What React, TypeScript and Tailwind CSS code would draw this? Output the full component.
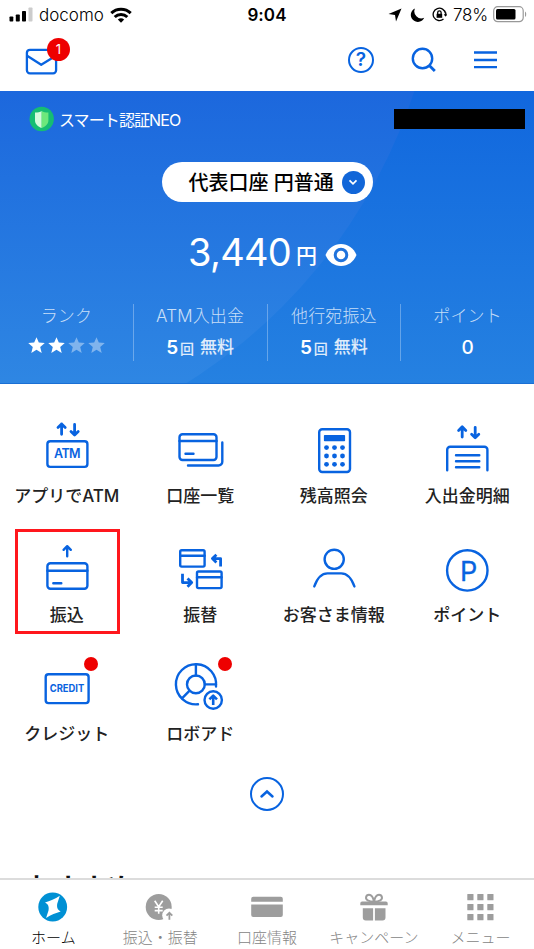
import React from 'react';

interface IconProps {
  children: React.ReactNode;
}

interface MenuItem {
  label: string;
  icon: React.ReactNode;
  isNew?: boolean;
  selected?: boolean;
}

interface TabItem {
  label: string;
  icon: React.ReactNode;
  active?: boolean;
}

const LineIcon: React.FC<IconProps> = ({ children }) => (
  <svg
    width="80"
    height="65"
    viewBox="0 0 80 65"
    fill="none"
    stroke="#0863e0"
    strokeWidth="2.4"
    strokeLinecap="round"
    strokeLinejoin="round"
  >
    {children}
  </svg>
);

const TabIcon: React.FC<IconProps> = ({ children }) => (
  <svg width="40" height="32" viewBox="-20 -16 40 32" fill="#9d9d9d">
    {children}
  </svg>
);

const menuItems: MenuItem[] = [
  {
    label: 'アプリでATM',
    icon: (
      <LineIcon>
        <path d="M34.6 19.3V9M31 12.6l3.6-3.6 3.6 3.6M47.6 9.5v10.3M44 16.4l3.6 3.6 3.6-3.6" strokeWidth="2.8" />
        <rect x="20.4" y="26.3" width="40" height="25.6" rx="2.8" />
        <text x="40.3" y="43.2" textAnchor="middle" fontSize="12.5" fontWeight="600" fill="#0863e0" stroke="none" textLength="26.5">
          ATM
        </text>
      </LineIcon>
    ),
  },
  {
    label: '口座一覧',
    icon: (
      <LineIcon>
        <rect x="19.5" y="19.2" width="37" height="25.8" rx="3" />
        <path d="M19.5 26h37M25.5 38.8h8M28 50.5h30.5a3.8 3.8 0 0 0 3.8-3.8V27.5" />
      </LineIcon>
    ),
  },
  {
    label: '残高照会',
    icon: (
      <LineIcon>
        <rect x="25.2" y="14.2" width="30.8" height="42.8" rx="3" />
        <rect x="29.9" y="20" width="21.2" height="6.2" rx="0.8" fill="#0863e0" stroke="none" />
        {[32.5, 40.5, 48.5].map((cx) =>
          [32.6, 41, 49.3].map((cy) => (
            <circle key={`${cx}-${cy}`} cx={cx} cy={cy} r="2.4" fill="#0863e0" stroke="none" />
          ))
        )}
      </LineIcon>
    ),
  },
  {
    label: '入出金明細',
    icon: (
      <LineIcon>
        <path d="M35.2 22.1V11.8M31.6 15.4l3.6-3.6 3.6 3.6M48.2 12.3v10.3M44.6 19.2l3.6 3.6 3.6-3.6" strokeWidth="2.8" />
        <path d="M20.2 55.2V34.7a3 3 0 0 1 3-3h34.2a3 3 0 0 1 3 3v20.5M29 40.2h23.3M29 46.2h23.3M29 52.2h23.3" />
      </LineIcon>
    ),
  },
  {
    label: '振込',
    selected: true,
    icon: (
      <LineIcon>
        <path d="M40.2 22.3V12.2M36.6 15.8l3.6-3.6 3.6 3.6" />
        <rect x="20.4" y="29.3" width="40" height="25.5" rx="3" />
        <path d="M20.4 36.7h40M26.3 49.2h8" />
      </LineIcon>
    ),
  },
  {
    label: '振替',
    icon: (
      <LineIcon>
        <rect x="20.2" y="16.2" width="24.4" height="16.4" rx="1.5" />
        <rect x="37" y="37.5" width="24.6" height="16.6" rx="1.5" />
        <path d="M20.2 21.8h24.4M37 43.2h24.6" />
        <path d="M60.6 32.6v-8h-7.4M56.4 20.8l-4 3.8 4 3.8M22.5 39.8v8.8h8M27.5 44.4l4.2 4.2-4.2 4.2" strokeWidth="2.8" strokeLinecap="butt" />
      </LineIcon>
    ),
  },
  {
    label: 'お客さま情報',
    icon: (
      <LineIcon>
        <circle cx="40.2" cy="25.3" r="9.6" />
        <path d="M20.3 52.4C23.3 44 28 39.4 33.5 39.4h13.7c5.5 0 10.2 4.6 13.2 13" />
      </LineIcon>
    ),
  },
  {
    label: 'ポイント',
    icon: (
      <LineIcon>
        <circle cx="40.3" cy="36.4" r="20.2" />
        <text x="41.6" y="46.5" textAnchor="middle" fontSize="27" fontWeight="400" fill="#0863e0" stroke="#0863e0" strokeWidth="0.3">
          P
        </text>
      </LineIcon>
    ),
  },
  {
    label: 'クレジット',
    isNew: true,
    icon: (
      <LineIcon>
        <rect x="18.7" y="21.2" width="42.9" height="28.9" rx="2.8" />
        <text x="40" y="39.4" textAnchor="middle" fontSize="10.5" fontWeight="700" fill="#0863e0" stroke="none" textLength="34.5" lengthAdjust="spacingAndGlyphs">
          CREDIT
        </text>
      </LineIcon>
    ),
  },
  {
    label: 'ロボアド',
    isNew: true,
    icon: (
      <LineIcon>
        <path d="M56 33.5A20.1 20.1 0 1 0 38 51.3" />
        <circle cx="35.9" cy="31.4" r="8.9" />
        <path d="M35.9 22.5v-11M44.8 31.4h11.2M29.6 37.7l-7.6 7.6" />
        <circle cx="53.2" cy="47" r="8.7" />
        <path d="M53.2 52v-9.3M49.4 46.4l3.8-3.8 3.8 3.8" strokeWidth="2.6" strokeLinecap="butt" />
      </LineIcon>
    ),
  },
];

const tabs: TabItem[] = [
  {
    label: 'ホーム',
    active: true,
    icon: (
      <TabIcon>
        <circle cx="-0.3" cy="0" r="14.4" fill="#0090d4" />
        <path d="M6.8-11.2C2-7.9-3-6-8-4.6-4.6-3-3.8 0-4.5 3.5L-6.9 11C-2 7.6 3 5.9 7.7 4.4 4.4 3 3.6 0 4.300-3.500Z" fill="#fff" />
      </TabIcon>
    ),
  },
  {
    label: '振込・振替',
    icon: (
      <TabIcon>
        <circle cx="-1.3" cy="0" r="13" />
        <path d="M-5.3-6.2l4 6 4-6M-1.3-.2v7M-5.3.3h8M-5.3 3.6h8" fill="none" stroke="#fff" strokeWidth="1.6" />
        <circle cx="9" cy="8.4" r="6.8" fill="#fff" />
        <path d="M9.4 12.8V6.2M6.5 8.6l2.9-2.9 2.9 2.9" fill="none" stroke="#9d9d9d" strokeWidth="1.8" />
      </TabIcon>
    ),
  },
  {
    label: '口座情報',
    icon: (
      <TabIcon>
        <path d="M-15.8-5.2v-3a2 2 0 0 1 2-2h27.6a2 2 0 0 1 2 2v3ZM-15.8-2.4h31.6V8a2 2 0 0 1-2 2h-27.6a2 2 0 0 1-2-2Z" />
      </TabIcon>
    ),
  },
  {
    label: 'キャンペーン',
    icon: (
      <TabIcon>
        <path d="M-13.7-1.7v-2a1.8 1.8 0 0 1 1.8-1.8h23.8a1.8 1.8 0 0 1 1.8 1.8v2ZM-11.2 1.2H-.9v12.3h-7.3a3 3 0 0 1-3-3ZM.9 1.2h10.6v9.3a3 3 0 0 1-3 3H.9Z" />
        <path d="M0-5.3C-.8-9.8-2.6-12.3-5-12.3-8.3-12.3-9-8-6.3-6.7-4.7-5.9-2.5-5.4 0-5.3 2.5-5.4 4.7-5.9 6.3-6.7 9-8 8.3-12.3 5-12.3 2.6-12.3.8-9.8 0-5.3Z" fill="none" stroke="#9d9d9d" strokeWidth="2" />
      </TabIcon>
    ),
  },
  {
    label: 'メニュー',
    icon: (
      <TabIcon>
        {[-13.7, -3.7, 6.3].map((x) =>
          [-13, -3, 7].map((y) => <rect key={`${x}${y}`} x={x} y={y} width="6.2" height="6.2" rx="0.5" />)
        )}
      </TabIcon>
    ),
  },
];

const StatusBar: React.FC = () => (
  <div className="flex h-[29px] items-center text-black">
    <div className="flex w-[178px] items-center pl-[9px]">
      <svg width="25" height="16" viewBox="0 0 25 16">
        <rect x="0.5" y="9.5" width="3.8" height="5" rx="0.8" />
        <rect x="6.8" y="7.5" width="4" height="7" rx="0.8" />
        <rect x="13" y="4" width="4" height="10.5" rx="0.8" />
        <rect x="19.5" y="0.5" width="4" height="14" rx="0.8" fill="#ccc" />
      </svg>
      <span className="ml-[5px] text-[17px] leading-5 font-light">docomo</span>
      <svg className="ml-[6px]" width="22" height="16" viewBox="0 0 22 16" fill="none" stroke="#000" strokeWidth="3">
        <path d="M1.3 6.2a14 14 0 0 1 19.4 0M4.7 10a9 9 0 0 1 12.6 0" />
        <path d="M11 15.8 7.8 12.6a5 5 0 0 1 6.4 0Z" fill="#000" stroke="none" />
      </svg>
    </div>
    <span className="flex-1 text-center text-[17px] leading-5 font-semibold tracking-[0.1px]">9:04</span>
    <div className="flex w-[178px] items-center justify-end pr-[7px]">
      <svg width="14" height="14" viewBox="0 0 14 14">
        <path d="M13.5.5 8 13.5 7 7 .5 6Z" />
      </svg>
      <svg className="ml-[8px]" width="15" height="14" viewBox="0 0 15 14">
        <path d="M5 .5a7 7 0 1 0 9.2 9.3A7 7 0 0 1 5 .5Z" />
      </svg>
      <svg className="ml-[7px]" width="15" height="15" viewBox="0 0 15 15" fill="none" stroke="#000" strokeWidth="1.3">
        <path d="M13.5 6.5A6.2 6.2 0 1 0 11.5 12M13.8 5.5v3.5" />
        <path d="M11.8 7.3h3.2l-1.6 2.4Z" fill="#000" stroke="none" />
        <rect x="4.6" y="6.8" width="5.6" height="4" fill="#000" stroke="none" />
        <path d="M5.7 7V5.5a1.7 1.7 0 0 1 3.4 0V7" />
      </svg>
      <span className="ml-[6px] w-[38px] text-[17px] leading-5 font-light tracking-[-0.2px]">78%</span>
      <svg className="ml-[2px]" width="34" height="17" viewBox="0 0 34 17">
        <rect x="0.7" y="0.7" width="29.5" height="15" rx="4" fill="none" stroke="#999" strokeWidth="1.2" />
        <rect x="3" y="3" width="19.5" height="10.4" rx="1.5" />
        <path d="M32 5.5c1.6.6 1.6 4.9 0 5.5Z" fill="#999" />
      </svg>
    </div>
  </div>
);

const Header: React.FC = () => (
  <div className="flex h-[62px] items-center justify-between pr-[36px] pl-[25px]">
    <div className="relative">
      <svg width="33" height="27" viewBox="0 0 33 27" fill="none" stroke="#0863e0" strokeWidth="2.3" className="mt-[3px]">
        <rect x="1.9" y="1.8" width="29.2" height="23.5" rx="3" />
        <path d="M2.5 8 16.2 16.8 30.5 8" strokeLinejoin="round" />
      </svg>
      <span className="absolute -top-[7px] left-[22px] flex h-[23px] w-[23px] items-center justify-center rounded-full bg-[#ee0000] text-[13px] text-white">
        1
      </span>
    </div>
    <div className="flex items-center text-[#0863e0]">
      <span className="flex h-[26px] w-[26px] items-center justify-center rounded-full border-2 border-[#0863e0] text-[19px] font-semibold">
        ?
      </span>
      <svg className="ml-[37px]" width="26" height="26" viewBox="0 0 26 26" fill="none" stroke="#0863e0" strokeWidth="2.4">
        <circle cx="11.5" cy="11.5" r="9.7" />
        <path d="m18.3 18.5 5.5 5.5" strokeWidth="2.8" />
      </svg>
      <svg className="ml-[37px]" width="24" height="20" viewBox="0 0 24 20" stroke="#0863e0" strokeWidth="2.3">
        <path d="M0 2.5h23M0 10h23M0 17.2h23" />
      </svg>
    </div>
  </div>
);

const FreeCount: React.FC = () => (
  <span className="flex items-center text-[17px] font-medium text-white/85">
    <b className="text-[19px] font-semibold text-white">5</b>
    <span className="mr-[6px] ml-[2px] text-[14px]">回</span>
    無料
  </span>
);

const Stat: React.FC<{ label: string; children: React.ReactNode }> = ({ label, children }) => (
  <div className="flex flex-1 flex-col items-center border-r border-white/30 last:border-r-0">
    <span className="mt-px h-[22px] text-[17px] leading-[22px] font-light tracking-[0.15px] whitespace-nowrap text-white/75">
      {label}
    </span>
    <div className="mt-[8px] flex h-[26px] items-center">{children}</div>
  </div>
);

const AccountPanel: React.FC = () => (
  <section className="relative h-[293px] overflow-hidden border-b border-[#1a6fd4] bg-linear-to-b from-[#1167de] to-[#2581e1] text-white">
    {/* Light arc behind the balance */}
    <div className="absolute -top-[711px] -left-[645px] h-[1086px] w-[1086px] rounded-full bg-linear-to-b from-[#1c67dd] from-65% to-[#2f87e3] to-93%" />
    <div className="relative flex h-full flex-col">
      <div className="mt-[18px] flex h-[20px] items-center justify-between pr-[9px] pl-[29px]">
        <div className="flex items-center">
          <svg width="25" height="26" viewBox="0 0 25 26">
            <circle cx="12.7" cy="13" r="12.2" fill="#16bd73" />
            <path d="M6 6.5c3 0 5-.4 6.7-1.500v17C9 20.5 6 18 6 14.5Z" fill="#d5fbdc" />
            <path d="M19.4 6.5c-3 0-5-.4-6.7-1.500v17c3.7-1.5 6.7-4 6.7-7.5Z" fill="#6de87c" />
          </svg>
          <span className="mt-px ml-[5px] text-[16px] tracking-[-0.9px]">スマート認証NEO</span>
        </div>
        <div className="h-[20px] w-[131px] bg-black" />
      </div>
      <div className="mx-auto mt-[33px] flex h-[40px] w-[211px] items-center rounded-full bg-white pl-[27px]">
        <span className="mt-px text-[20px] font-medium whitespace-nowrap text-black">代表口座 円普通</span>
        <span className="ml-[8px] flex h-[23px] w-[23px] shrink-0 items-center justify-center rounded-full bg-[#1166d8]">
          <svg width="10" height="7" viewBox="0 0 10 7" fill="none" stroke="#fff" strokeWidth="1.7">
            <path d="m1.5 1.3 3.5 3.5 3.5-3.5" />
          </svg>
        </span>
      </div>
      <div className="mt-[28px] flex h-[44px] items-center pl-[188px]">
        <span className="w-[103px] text-[38px] leading-[44px] tracking-[-0.7px]">3,440</span>
        <span className="mt-[7px] ml-[5px] text-[21px] leading-[30px] font-medium">円</span>
        <svg className="mt-[6px] ml-[8px]" width="32" height="24" viewBox="0 0 32 24">
          <path d="M.5 12C3.5 5 9 1 16 1s12.500 4 15.500 11c-3 7-8.500 11-15.500 11S3.5 19 .5 12Z" fill="#fff" />
          <circle cx="16" cy="12" r="5.8" fill="none" stroke="#2073dc" strokeWidth="3" />
        </svg>
      </div>
      <div className="mt-[30px] flex h-[57px]">
        <Stat label="ランク">
          <div className="mb-[5px] flex gap-[3px]">
            {[1, 1, 0.4, 0.4].map((opacity, i) => (
              <svg key={i} width="17" height="17" viewBox="0 0 17 17" fill="#fff" opacity={opacity}>
                <path d="m8.5.2 2.3 5.4 6 .5-4.600 3.900 1.500 6.100-5.200-3.300-5.200 3.300 1.500-6.100L.2 6.100l6-.5Z" />
              </svg>
            ))}
          </div>
        </Stat>
        <Stat label="ATM入出金">
          <FreeCount />
        </Stat>
        <Stat label="他行宛振込">
          <FreeCount />
        </Stat>
        <Stat label="ポイント">
          <span className="text-[19px] font-medium">0</span>
        </Stat>
      </div>
    </div>
  </section>
);

const App: React.FC = () => {
  return (
    <div className="flex h-[949px] w-[534px] flex-col overflow-hidden bg-white font-['Inter','Noto_Sans_CJK_JP',sans-serif]">
      <StatusBar />
      <Header />
      <AccountPanel />

      {/* Service shortcuts */}
      <main className="flex min-h-0 flex-1 flex-col overflow-hidden">
        <div className="grid shrink-0 grid-cols-4 pt-[31px]">
          {menuItems.map((item) => (
            <div key={item.label} className="relative flex h-[119px] flex-col items-center">
              {item.icon}
              <span className="mt-[4px] text-[17px] leading-[24px] font-medium whitespace-nowrap text-[#222]">
                {item.label}
              </span>
              {item.isNew && (
                <span className="absolute top-[4px] left-[84px] h-[14px] w-[14px] rounded-full bg-[#ee0000]" />
              )}
              {item.selected && (
                <span className="absolute -top-[5px] left-[15px] h-[105px] w-[105px] border-[3px] border-[#ff171d]" />
              )}
            </div>
          ))}
        </div>
        <button className="mx-auto mt-[5px] flex h-[34px] w-[34px] shrink-0 items-center justify-center rounded-full border-2 border-[#0863e0]">
          <svg width="16" height="10" viewBox="0 0 16 10" fill="none" stroke="#0863e0" strokeWidth="2.5" strokeLinecap="round">
            <path d="m2.5 7.5 5.500-5 5.500 5" />
          </svg>
        </button>
        <h2 className="mt-[59px] shrink-0 pl-[27px] text-[26px] leading-[36px] font-bold text-[#111]">おすすめ</h2>
      </main>

      <nav className="flex h-[71px] shrink-0 border-t-2 border-[#dcdcdc] bg-white">
        {tabs.map((tab) => (
          <div key={tab.label} className="flex flex-1 flex-col items-center pt-[11px]">
            {tab.icon}
            <span
              className={`mt-[4px] text-[15px] leading-[22px] font-light whitespace-nowrap ${
                tab.active ? 'text-black' : 'text-[#858585]'
              }`}
            >
              {tab.label}
            </span>
          </div>
        ))}
      </nav>
    </div>
  );
};

export default App;
